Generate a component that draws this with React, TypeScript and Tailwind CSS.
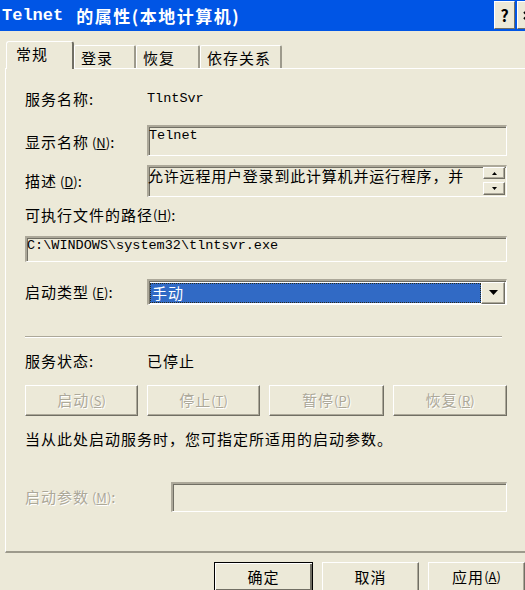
import React from 'react'

const sunken =
  'border-t-2 border-l-2 border-b border-r border-t-[#ACA899] border-l-[#ACA899] border-b-white border-r-white shadow-[inset_1px_1px_0_#716F64]'
const raised =
  'border-t border-l border-b border-r border-t-white border-l-white border-b-[#716F64] border-r-[#716F64] shadow-[inset_-1px_-1px_0_#ACA899]'
const disabledText = 'text-[#ACA899] [text-shadow:1px_1px_0_#ffffff]'
const mono = "font-['Liberation_Mono','Noto_Sans_CJK_SC',monospace]"

function Key({ k }: { k: string }) {
  return (
    <span className="text-[13px] tracking-normal">
      {' '}(<u>{k}</u>)
    </span>
  )
}

function Tab({ label, active, w }: { label: string; active?: boolean; w: string }) {
  if (active) {
    return (
      <div
        className={`relative z-10 -mb-px h-[28px] ${w} rounded-t-[3px] border-t border-l border-r-2 border-t-white border-l-white border-r-[#716F64] bg-[#ECE9D8] pl-[9px] pt-[4px] leading-[16px]`}
      >
        {label}
      </div>
    )
  }
  return (
    <div
      className={`h-[23px] ${w} rounded-t-[2px] border-t border-l border-r-2 border-t-white border-l-white border-r-[#9D9A8C] pl-[6px] pt-[4px] leading-[16px]`}
    >
      {label}
    </div>
  )
}

function Btn({ children, w, disabled }: { children: React.ReactNode; w: string; disabled?: boolean }) {
  return (
    <div
      className={`flex h-[31px] ${w} items-center justify-center bg-[#ECE9D8] ${raised} ${disabled ? disabledText : 'text-black'}`}
    >
      {children}
    </div>
  )
}

function Arrow({ dir, size = 5 }: { dir: 'up' | 'down'; size?: number }) {
  const h = Math.ceil(size / 2)
  return (
    <svg width={size} height={h} viewBox={`0 0 ${size} ${h}`}>
      {dir === 'down' ? (
        <polygon points={`0,0 ${size},0 ${size / 2},${h}`} fill="#000" />
      ) : (
        <polygon points={`0,${h} ${size},${h} ${size / 2},0`} fill="#000" />
      )}
    </svg>
  )
}

export default function App() {
  return (
    <div className="relative h-[590px] w-[525px] overflow-hidden bg-[#ECE9D8] font-['Noto_Sans_CJK_SC',sans-serif] text-[15px] tracking-[1px] text-black">
      {/* title bar */}
      <div className="relative flex h-[31px] items-center bg-[#0055E5] pl-[2px] font-bold text-white">
        <span className={`${mono} text-[17px] tracking-normal`}>Telnet</span>
        <span className="ml-[13px] text-[17px] tracking-[1.5px]">的属性(本地计算机)</span>
        <div className="absolute left-[494px] top-[1px] flex h-[28px] w-[21px] items-center justify-center border border-t-white border-l-white border-b-[#716F64] border-r-[#716F64] bg-[#ECE9D8] text-[16px] font-bold leading-none tracking-normal text-black">
          ?
        </div>
        <div className="absolute left-[517px] top-[1px] flex h-[28px] w-[21px] items-center justify-center border border-t-white border-l-white border-b-[#716F64] border-r-[#716F64] bg-[#ECE9D8]">
          <svg width="9" height="9" viewBox="0 0 9 9">
            <path d="M1 1 L8 8 M8 1 L1 8" stroke="#000" strokeWidth="2" />
          </svg>
        </div>
      </div>

      {/* tabs */}
      <div className="mt-[10px] flex h-[27px] items-end pl-[6px]">
        <Tab label="常规" active w="w-[68px]" />
        <Tab label="登录" w="w-[62px]" />
        <Tab label="恢复" w="w-[64px]" />
        <Tab label="依存关系" w="w-[82px]" />
      </div>

      {/* panel */}
      <div className="ml-[5px] h-[485px] w-[530px] border-t border-l border-b-2 border-t-white border-l-white border-b-[#9D9A8C] pl-[19px] pt-[22px]">
        <div className="flex h-[16px] items-center">
          <div className="w-[122px]">服务名称:</div>
          <div className={`${mono} text-[13.5px] tracking-normal`}>TlntSvr</div>
        </div>

        <div className="mt-[18px] flex items-center">
          <div className="w-[122px] pt-[3px]">
            显示名称<Key k="N" />:
          </div>
          <div className={`h-[31px] w-[360px] ${sunken} pt-[1px] ${mono} text-[13.5px] leading-[16px] tracking-normal`}>
            Telnet
          </div>
        </div>

        <div className="mt-[9px] flex items-center">
          <div className="w-[122px]">
            描述<Key k="D" />:
          </div>
          <div className={`flex h-[32px] w-[360px] ${sunken}`}>
            <div className="-ml-[1px] flex-1 whitespace-nowrap pt-[1px] leading-[16px] tracking-[0.8px]">
              允许远程用户登录到此计算机并运行程序，并
            </div>
            <div className="mr-[1px] flex flex-col gap-[3px]">
              <div className={`flex h-[12px] w-[22px] items-center justify-center ${raised}`}>
                <Arrow dir="up" />
              </div>
              <div className={`flex h-[13px] w-[22px] items-center justify-center ${raised}`}>
                <Arrow dir="down" />
              </div>
            </div>
          </div>
        </div>

        <div className="mt-[10px] flex h-[16px] items-center">
          可执行文件的路径<Key k="H" />:
        </div>

        <div className={`mt-[13px] h-[26px] w-[482px] ${sunken} ${mono} text-[13.5px] leading-[16px] tracking-normal`}>
          C:\WINDOWS\system32\tlntsvr.exe
        </div>

        <div className="mt-[17px] flex items-center">
          <div className="w-[122px]">
            启动类型<Key k="E" />:
          </div>
          <div className={`flex h-[26px] w-[360px] items-center ${sunken} bg-white pl-[1px] pr-[1px]`}>
            <div className="h-[20px] flex-1 border border-dotted border-[#2a2a1a] bg-[#316AC5] pl-[1px] leading-[18px] text-white">
              手动
            </div>
            <div className={`flex h-[22px] w-[24px] items-center justify-center bg-[#ECE9D8] ${raised}`}>
              <Arrow dir="down" size={9} />
            </div>
          </div>
        </div>

        <div className="mt-[31px] w-[477px] border-t border-b border-t-[#ACA899] border-b-white" />

        <div className="mt-[15px] flex h-[16px] items-center">
          <div className="w-[122px]">服务状态:</div>
          <div>已停止</div>
        </div>

        <div className="mt-[16px] flex gap-[9px]">
          <Btn w="w-[113px]" disabled>
            启动<Key k="S" />
          </Btn>
          <Btn w="w-[113px]" disabled>
            停止<Key k="T" />
          </Btn>
          <Btn w="w-[115px]" disabled>
            暂停<Key k="P" />
          </Btn>
          <Btn w="w-[114px]" disabled>
            恢复<Key k="R" />
          </Btn>
        </div>

        <div className="mt-[15px] flex h-[16px] items-center">当从此处启动服务时，您可指定所适用的启动参数。</div>

        <div className="mt-[35px] flex items-center">
          <div className={`w-[146px] ${disabledText}`}>
            启动参数<Key k="M" />:
          </div>
          <div className={`h-[30px] w-[336px] ${sunken}`} />
        </div>
      </div>

      {/* dialog buttons */}
      <div className="ml-[214px] mt-[9px] flex gap-[9px]">
        <div className="flex h-[30px] w-[102px] items-center justify-center border border-black bg-[#ECE9D8] shadow-[inset_1px_1px_0_#ffffff,inset_-2px_-2px_0_#716F64]">
          确定
        </div>
        <div className={`flex h-[30px] w-[100px] items-center justify-center bg-[#ECE9D8] ${raised}`}>取消</div>
        <div className={`flex h-[30px] w-[100px] items-center justify-center bg-[#ECE9D8] ${raised}`}>
          应用<Key k="A" />
        </div>
      </div>
    </div>
  )
}
